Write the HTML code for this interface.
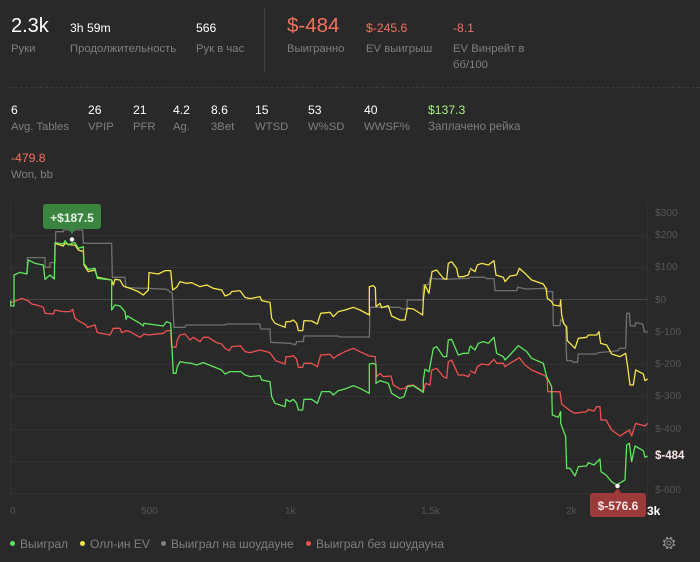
<!DOCTYPE html>
<html><head><meta charset="utf-8">
<style>
html,body{margin:0;padding:0;background:#292929;}
#p{position:relative;width:700px;height:562px;overflow:hidden;background:#292929;font-family:"Liberation Sans",sans-serif;}
.t{position:absolute;white-space:nowrap;line-height:16px;}
.v{font-size:12.2px;color:#fff;}
.l{font-size:11.3px;color:#7f7f7f;}
.r{color:#f2705f;}
.a{position:absolute;font-size:10px;color:#555;line-height:12px;white-space:nowrap;}
.y{left:655px;font-size:10.2px;}
.lg{position:absolute;top:536px;font-size:12px;line-height:16px;color:#7f7f7f;white-space:nowrap;}
.d{position:absolute;top:541px;width:5px;height:5px;border-radius:50%;}
svg{position:absolute;left:0;top:0;}
</style></head><body><div id="p">
<div class="t" style="left:11px;top:14px;font-size:20px;line-height:24px;color:#fff;">2.3k</div>
<div class="t l" style="left:11px;top:41px;">Руки</div>
<div class="t v" style="left:70px;top:20px;">3h 59m</div>
<div class="t l" style="left:70px;top:41px;">Продолжительность</div>
<div class="t v" style="left:196px;top:20px;">566</div>
<div class="t l" style="left:196px;top:41px;">Рук в час</div>
<div style="position:absolute;left:264px;top:8px;width:1px;height:64px;background:#3f3f3f;"></div>
<div class="t r" style="left:287px;top:14px;font-size:20.5px;line-height:24px;">$-484</div>
<div class="t l" style="left:287px;top:41px;">Выигранно</div>
<div class="t v r" style="left:366px;top:20px;">$-245.6</div>
<div class="t l" style="left:366px;top:41px;">EV выигрыш</div>
<div class="t v r" style="left:453px;top:20px;">-8.1</div>
<div class="t l" style="left:453px;top:41px;">EV Винрейт в</div>
<div class="t l" style="left:453px;top:57px;">бб/100</div>
<div style="position:absolute;left:10px;right:0;top:87px;border-top:1px dashed #3c3c3c;"></div>

<div class="t v" style="left:11px;top:102px;">6</div><div class="t l" style="left:11px;top:119px;">Avg. Tables</div>
<div class="t v" style="left:88px;top:102px;">26</div><div class="t l" style="left:88px;top:119px;">VPIP</div>
<div class="t v" style="left:133px;top:102px;">21</div><div class="t l" style="left:133px;top:119px;">PFR</div>
<div class="t v" style="left:173px;top:102px;">4.2</div><div class="t l" style="left:173px;top:119px;">Ag.</div>
<div class="t v" style="left:211px;top:102px;">8.6</div><div class="t l" style="left:211px;top:119px;">3Bet</div>
<div class="t v" style="left:255px;top:102px;">15</div><div class="t l" style="left:255px;top:119px;">WTSD</div>
<div class="t v" style="left:308px;top:102px;">53</div><div class="t l" style="left:308px;top:119px;">W%SD</div>
<div class="t v" style="left:364px;top:102px;">40</div><div class="t l" style="left:364px;top:119px;">WWSF%</div>
<div class="t v" style="left:428px;top:102px;color:#a6f27c;">$137.3</div><div class="t l" style="left:428px;top:119px;font-size:11.6px;">Заплачено рейка</div>
<div class="t v r" style="left:11px;top:150px;">-479.8</div><div class="t l" style="left:11px;top:167px;">Won, bb</div>

<svg width="700" height="562" viewBox="0 0 700 562">
<g stroke="#323232" stroke-width="1" fill="none">
<path d="M10.5 203V499M647.5 203V499"/>
<path d="M10 235.5H647M10 267.5H647M10 332.5H647M10 364.5H647M10 396.5H647M10 429.5H647M10 461.5H647M10 493.5H647"/>
<path d="M10 299.5H647" stroke="#4a4a4a"/>
</g>
<g fill="none" stroke-width="1.3" stroke-linejoin="round">
<g stroke="#707070" >
<polyline vector-effect="non-scaling-stroke" transform="translate(0,200) scale(.3333)" points="82,222 82,173 135,173 135,202 150,202 150,188 165,188 167,95 190,95 190,90 248,90 250,130 335,130 337,232 375,232 378,262 420,265 445,265 500,268 517,280 522,382 555,382 558,375 675,375 680,372 720,372"/>
<polyline vector-effect="non-scaling-stroke" transform="translate(230,240) scale(.3333)" points="30,252 90,252 92,267 120,267 122,307 180,310 197,314 200,305 220,305 222,288 325,288 328,291 418,291 420,202 510,202 515,207 530,207 532,180 578,180 580,135 597,133 600,115 640,118 720,115"/>
<polyline vector-effect="non-scaling-stroke" transform="translate(460,200) scale(.3333)" points="30,232 75,232 80,236 102,236 105,272 170,272 173,262 200,267 260,265 262,275 278,275 280,377 300,377 302,358 317,378 320,482 335,482 340,487 352,487 355,462 410,462 415,458 450,455 475,452 478,445 497,445 500,340 508,340 511,378 525,378 527,368 548,372 553,395 563,396"/>
</g>
<g stroke="#f4e64a">
<polyline vector-effect="non-scaling-stroke" transform="translate(0,200) scale(.3333)" points="165,130 190,138 195,130 215,135 225,135 235,150 250,155 252,195 265,215 285,210 292,232 335,240 340,255 345,238 360,240 370,258 390,265 415,275 430,285 445,270 447,218 475,222 495,212 512,212 518,270 530,262 540,245 560,250 575,248 600,260 620,255 640,265 665,270 675,288 690,282 695,275 720,272"/>
<polyline vector-effect="non-scaling-stroke" transform="translate(230,240) scale(.3333)" points="30,152 45,172 60,176 90,170 95,182 120,187 125,235 135,250 165,262 168,245 180,245 190,240 200,250 205,272 218,272 222,242 245,243 262,252 272,220 300,217 310,230 325,215 345,210 370,202 390,210 418,225 418,140 430,137 436,143 438,200 450,190 455,203 475,197 485,228 510,240 525,240 532,205 550,207 578,225 580,180 585,135 597,160 606,95 620,90 640,115 650,118 655,70 665,65 680,85 685,110 700,110 715,105 720,90"/>
<polyline vector-effect="non-scaling-stroke" transform="translate(460,200) scale(.3333)" points="30,205 45,215 52,195 65,190 85,195 102,182 108,225 130,232 135,245 150,228 170,225 178,205 195,220 215,240 250,252 258,265 262,295 275,305 280,315 300,318 302,300 305,345 312,372 320,380 322,422 345,445 355,415 380,412 385,405 410,405 417,395 422,430 440,435 455,462 480,470 497,460 503,500 510,555 520,555 527,510 550,522 555,542 563,537"/>
</g>
<g stroke="#ee5050">
<polyline vector-effect="non-scaling-stroke" transform="translate(0,200) scale(.3333)" points="32,308 50,302 65,295 85,303 95,312 110,315 130,322 135,340 160,342 165,330 190,335 210,335 218,328 225,355 240,365 250,370 258,375 262,382 285,375 292,398 330,405 340,385 360,385 365,398 380,392 390,395 420,412 432,402 445,405 490,400 500,392 512,392 515,440 528,442 532,420 540,405 555,402 570,420 580,412 600,425 610,412 625,412 650,428 665,432 675,445 688,452 695,440 720,438"/>
<polyline vector-effect="non-scaling-stroke" transform="translate(230,240) scale(.3333)" points="30,316 45,335 60,338 90,330 120,338 130,352 137,362 165,372 168,350 180,350 190,347 200,358 205,382 218,382 222,370 245,370 262,380 272,345 300,343 310,355 325,345 345,335 370,325 390,335 418,348 436,350 440,410 450,400 460,410 483,408 490,435 510,447 525,445 532,437 550,435 580,455 587,430 600,435 605,390 620,385 640,410 650,415 655,365 665,360 685,405 700,405 715,410 720,400"/>
<polyline vector-effect="non-scaling-stroke" transform="translate(460,200) scale(.3333)" points="30,512 45,520 52,500 65,492 85,495 102,478 110,490 130,490 135,500 150,490 178,473 195,495 215,510 250,525 258,530 262,540"/>
<polyline vector-effect="non-scaling-stroke" transform="translate(520,380) scale(.3333)" points="82,0 83,35 120,35 125,72 150,92 165,100 200,95 205,88 222,93 230,80 240,80 243,120 258,120 275,150 300,168 320,155 328,150 335,168 347,130 375,138 383,130"/>
</g>
<g stroke="#5fe65f">
<polyline vector-effect="non-scaling-stroke" transform="translate(0,200) scale(.3333)" points="32,302 32,318 42,318 42,225 60,217 80,222 85,180 105,190 130,195 135,238 150,225 163,237 165,128 190,132 195,122 205,135 215,130 225,128 235,145 250,140 252,190 265,208 285,205 292,235 335,240 335,330 345,315 360,318 375,335 378,358 382,348 420,370 430,378 432,370 490,378 500,365 512,370 520,520 528,520 532,500 540,485 555,488 575,490 590,495 610,488 640,500 665,510 675,522 690,515 720,515"/>
<polyline vector-effect="non-scaling-stroke" transform="translate(230,240) scale(.3333)" points="30,393 45,405 60,410 90,407 95,420 120,425 125,470 135,490 165,500 168,478 180,485 190,478 200,490 205,510 218,510 222,478 245,478 262,490 275,455 300,455 310,465 325,452 345,447 370,437 390,445 418,460 418,372 430,370 438,375 438,430 450,422 475,430 485,460 510,475 522,470 532,440 550,437 580,457 580,420 585,388 597,395 610,325 620,320 640,350 650,350 655,300 665,298 685,345 700,340 715,340 720,320"/>
<polyline vector-effect="non-scaling-stroke" transform="translate(460,200) scale(.3333)" points="30,437 45,450 55,430 70,425 85,430 102,412 110,460 130,470 135,480 150,465 175,437 200,455 215,475 250,490 260,530 275,560"/>
<polyline vector-effect="non-scaling-stroke" transform="translate(520,380) scale(.3333)" points="95,20 97,105 115,112 122,95 122,130 137,170 140,265 150,265 165,288 175,260 200,258 205,248 222,255 240,237 243,275 258,285 275,305 290,315 315,300 320,195 328,190 335,245 345,198 370,212 375,232 383,228"/>
</g>
</g>
<circle cx="72" cy="239.5" r="2.2" fill="#fff"/>
<circle cx="617.5" cy="486" r="2.2" fill="#fff"/>
<path d="M68 229H76L72 234Z" fill="#3a843f"/>
<path d="M613.5 493H621.5L617.5 488.5Z" fill="#9c3a3a"/>
<g transform="translate(669,543)" fill="none" stroke="#8a8a8a">
<circle r="2" stroke-width="1"/>
<circle r="4.4" stroke-width="1"/>
<circle r="5.5" stroke-width="1.6" stroke-dasharray="2.3 2" transform="rotate(10)"/>
</g>
</svg>

<div style="position:absolute;left:43px;top:204px;width:58px;height:25px;border-radius:3px;background:#3a843f;color:#e8f3e8;font-size:12px;font-weight:bold;line-height:29px;text-align:center;">+$187.5</div>
<div style="position:absolute;left:590px;top:493px;width:56px;height:24px;border-radius:3px;background:#9c3a3a;color:#f5e4e4;font-size:12px;font-weight:bold;line-height:26px;text-align:center;">$-576.6</div>

<div class="a y" style="top:208px;">$300</div>
<div class="a y" style="top:230px;">$200</div>
<div class="a y" style="top:262px;">$100</div>
<div class="a y" style="top:295px;">$0</div>
<div class="a y" style="top:327px;">$-100</div>
<div class="a y" style="top:359px;">$-200</div>
<div class="a y" style="top:391px;">$-300</div>
<div class="a y" style="top:424px;">$-400</div>
<div class="a y" style="top:485px;">$-600</div>
<div class="a" style="left:655px;top:450px;font-size:11.5px;font-weight:bold;color:#f3e6e3;">$-484</div>
<div class="a" style="left:10px;top:506px;">0</div>
<div class="a" style="left:141px;top:506px;">500</div>
<div class="a" style="left:285px;top:506px;">1k</div>
<div class="a" style="left:421px;top:506px;">1.5k</div>
<div class="a" style="left:566px;top:506px;">2k</div>
<div class="a" style="left:647px;top:505px;font-size:12px;font-weight:bold;color:#fff;">3k</div>

<div class="d" style="left:10px;background:#5fe65f;"></div><div class="lg" style="left:20px;">Выиграл</div>
<div class="d" style="left:80px;background:#f4e64a;"></div><div class="lg" style="left:90px;">Олл-ин EV</div>
<div class="d" style="left:161px;background:#808080;"></div><div class="lg" style="left:171px;">Выиграл на шоудауне</div>
<div class="d" style="left:306px;background:#ee5050;"></div><div class="lg" style="left:316px;">Выиграл без шоудауна</div>
</div></body></html>
